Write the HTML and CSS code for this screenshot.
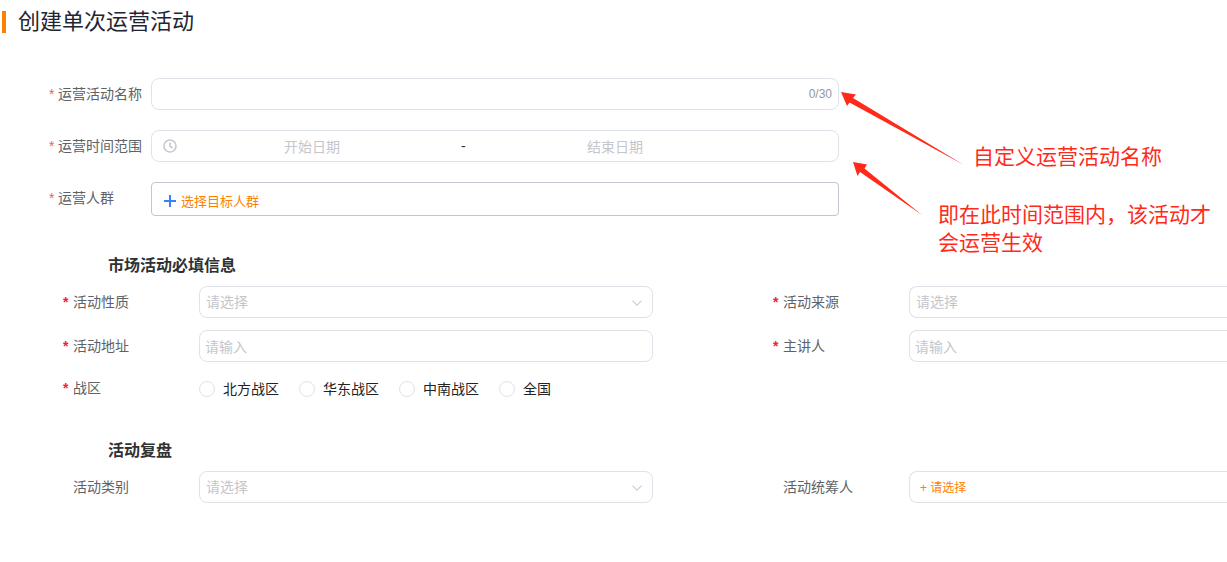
FILE: index.html
```html
<!DOCTYPE html>
<html lang="zh-CN">
<head>
<meta charset="utf-8">
<title>创建单次运营活动</title>
<link rel="stylesheet" href="styles.css">
</head>
<body>
<main class="page">
  <h1 class="title">创建单次运营活动</h1>

  <section class="basic">
    <div class="row">
      <label class="label"><span class="star">*</span>运营活动名称</label>
      <div class="box input"><span class="count">0/30</span></div>
    </div>
    <div class="row">
      <label class="label"><span class="star">*</span>运营时间范围</label>
      <div class="box date">
        <svg class="clock" viewBox="0 0 14 14"><circle cx="7" cy="7" r="6" /><path d="M7 3.4V7.3L9.6 9" /></svg>
        <span class="date-part">开始日期</span>
        <span class="dash">-</span>
        <span class="date-part end">结束日期</span>
      </div>
    </div>
    <div class="row">
      <label class="label"><span class="star">*</span>运营人群</label>
      <div class="box crowd">
        <svg class="plus" viewBox="0 0 12 12"><path d="M6 0V12M0 6H12" /></svg>
        <span class="orange">选择目标人群</span>
      </div>
    </div>
  </section>

  <h2 class="heading first">市场活动必填信息</h2>
  <section class="grid">
    <div class="field">
      <label class="label2"><span class="star2">*</span>活动性质</label>
      <div class="box wide select"><span class="ph">请选择</span><svg class="chev" viewBox="0 0 10 6"><path d="M.5 .7L5 5.2L9.5 .7" /></svg></div>
    </div>
    <div class="field">
      <label class="label2"><span class="star2">*</span>活动来源</label>
      <div class="box wide open select"><span class="ph">请选择</span></div>
    </div>
    <div class="field">
      <label class="label2"><span class="star2">*</span>活动地址</label>
      <div class="box wide text"><span class="ph">请输入</span></div>
    </div>
    <div class="field">
      <label class="label2"><span class="star2">*</span>主讲人</label>
      <div class="box wide open text"><span class="ph">请输入</span></div>
    </div>
    <div class="field radios-row">
      <label class="label2 radios-label"><span class="star2">*</span>战区</label>
      <div class="radios">
        <span class="radio"><i class="dot"></i>北方战区</span>
        <span class="radio"><i class="dot"></i>华东战区</span>
        <span class="radio"><i class="dot"></i>中南战区</span>
        <span class="radio"><i class="dot"></i>全国</span>
      </div>
    </div>
  </section>

  <h2 class="heading second">活动复盘</h2>
  <section class="grid">
    <div class="field">
      <label class="label2"><span class="star2 blank"></span>活动类别</label>
      <div class="box wide select"><span class="ph">请选择</span><svg class="chev" viewBox="0 0 10 6"><path d="M.5 .7L5 5.2L9.5 .7" /></svg></div>
    </div>
    <div class="field">
      <label class="label2"><span class="star2 blank"></span>活动统筹人</label>
      <div class="box wide open pick"><span class="orange small">+ 请选择</span></div>
    </div>
  </section>
</main>

<svg class="arrows" viewBox="0 0 1227 562">
  <polygon points="841,92 856,94.5 853,98 964,165 849.5,102.5 847,106" />
  <polygon points="853,162 867,164.5 864.5,168.5 922,215 860,172 857.5,176" />
</svg>
<p class="note note-one">自定义运营活动名称</p>
<p class="note note-two">即在此时间范围内，该活动才<br>会运营生效</p>
</body>
</html>
```

FILE: styles.css
```css
* { box-sizing: border-box; }
html, body { margin: 0; height: 562px; overflow: hidden; background: #fff; }
body {
  position: relative;
  width: 1227px;
  font-family: "Liberation Sans", "Noto Sans CJK SC", sans-serif;
  color: #606266;
}
.page { width: 1227px; padding: 11px 0 0 2px; }
.title {
  margin: 0;
  height: 22px;
  padding-left: 12px;
  border-left: 4px solid #ff8000;
  font-size: 22px;
  line-height: 22px;
  font-weight: 400;
  color: #1f2633;
}
.basic { margin-top: 45px; display: flex; flex-direction: column; gap: 20px; }
.row { display: flex; align-items: flex-start; }
.label {
  width: 149px;
  padding-left: 47px;
  font-size: 14px;
  line-height: 32px;
  white-space: nowrap;
}
.star { color: #ff5a45; display: inline-block; width: 9px; }
.box {
  display: flex;
  align-items: center;
  height: 32px;
  background: #fff;
  border: 1px solid #e0e2ea;
  border-radius: 8px;
}
.input, .date, .crowd { width: 688px; }
.input { justify-content: flex-end; padding-right: 6px; }
.count { font-size: 12px; color: #94989f; }
.date { padding-left: 11px; font-size: 14px; }
.clock { width: 14px; height: 14px; flex: none; fill: none; stroke: #c5c8d0; stroke-width: 1.6; }
.date-part { flex: none; width: 270px; text-align: center; color: #c4c6cc; }
.end { width: 300px; }
.dash { margin-left: 14px; width: 4px; text-align: center; color: #333; }
.crowd {
  height: 34px;
  padding: 3px 0 0 12px;
  border-color: #c3c6d0;
  border-radius: 4px;
}
.plus { width: 12px; height: 12px; flex: none; margin-right: 5px; fill: none; stroke: #3d7eff; stroke-width: 2; }
.orange { color: #ff8000; font-size: 13px; }
.small { font-size: 12px; }
.heading { margin: 0; padding-left: 106px; font-size: 16px; line-height: 22px; font-weight: 700; color: #303133; }
.first { margin-top: 39px; }
.second { margin-top: 43px; }
.grid {
  display: grid;
  grid-template-columns: 710px 1fr;
  row-gap: 12px;
  margin-top: 9px;
}
.field { display: flex; align-items: flex-start; }
.label2 {
  flex: none;
  width: 197px;
  padding-left: 61px;
  font-size: 14px;
  line-height: 32px;
  white-space: nowrap;
}
.star2 { display: inline-block; width: 10px; color: #f5222d; font-weight: 700; }
.wide { width: 454px; padding: 0 7px 2px 6px; font-size: 14px; position: relative; }
.open { flex: 1; width: auto; border-right: 0; border-radius: 8px 0 0 8px; }
.text { padding-left: 5px; padding-bottom: 0; }
.pick { padding-left: 10px; }
.ph { color: #c4c6cc; }
.chev {
  position: absolute;
  right: 10px;
  top: 13px;
  width: 10px;
  height: 6px;
  fill: none;
  stroke: #c9ccd3;
  stroke-width: 1.1;
}
.radios-row { grid-column: 1 / -1; margin-top: 7px; }
.radios-label { line-height: 14px; }
.radios { display: flex; gap: 20px; }
.radio { display: flex; align-items: center; gap: 8px; font-size: 14px; line-height: 16px; color: #222; }
.dot { width: 16px; height: 16px; border: 1px solid #e0e2ea; border-radius: 50%; }
.arrows { position: absolute; left: 0; top: 0; width: 1227px; height: 562px; pointer-events: none; fill: #ff2a1a; }
.note {
  position: absolute;
  margin: 0;
  font-size: 21px;
  line-height: 28px;
  color: #ff2a1a;
  white-space: nowrap;
}
.note-one { left: 973px; top: 143px; }
.note-two { left: 938px; top: 201px; }
```
